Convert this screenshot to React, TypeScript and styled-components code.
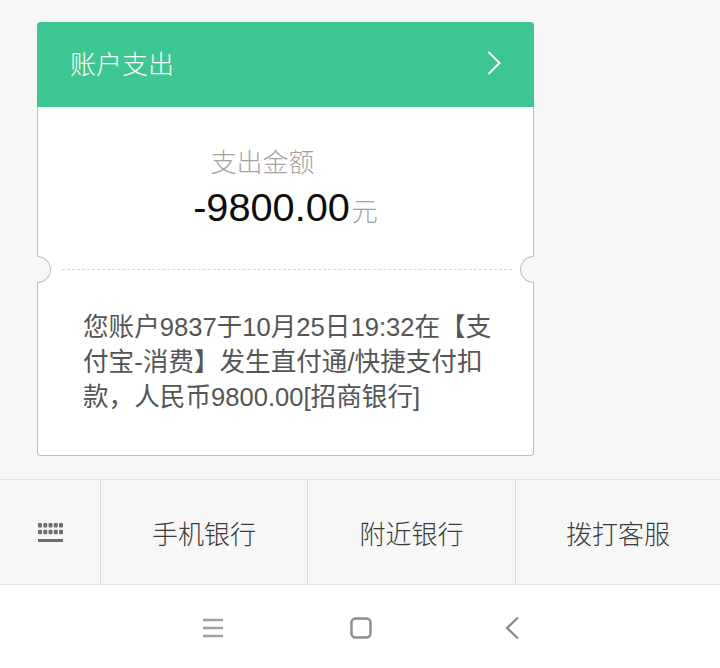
import React from 'react'
import styled, { createGlobalStyle } from 'styled-components'

const GlobalStyle = createGlobalStyle`
  html, body {
    margin: 0;
    padding: 0;
    background: #f7f7f7;
  }
  body {
    font-family: "Liberation Sans", "Noto Sans CJK SC", sans-serif;
  }
`

const Page = styled.div`
  width: 720px;
  height: 668px;
  display: flex;
  flex-direction: column;
  overflow: hidden;
`

const Content = styled.div`
  height: 480px;
  box-sizing: border-box;
  padding: 22px 0 0 37px;
  border-bottom: 1px solid #e4e4e4;
`

const Card = styled.div`
  width: 497px;
  height: 434px;
  box-sizing: border-box;
  background: #fff;
  border-radius: 4px;
  border: 1px solid #bdbdbd;
  border-top: none;
  display: flex;
  flex-direction: column;
`

const CardHeader = styled.div`
  height: 85px;
  box-sizing: border-box;
  margin: 0 -1px;
  padding: 0 33px 4px 33px;
  background: #3ec692;
  border-radius: 4px 4px 0 0;
  display: flex;
  align-items: center;
  justify-content: space-between;
  color: #fff;
  font-size: 26px;
  font-weight: 300;
`

const Summary = styled.div`
  height: 163px;
  box-sizing: border-box;
  padding-top: 38px;
  border-bottom: 1px dashed #d6d6d6;
  margin: 0 21px 0 24px;
  display: flex;
  flex-direction: column;
  align-items: center;
  position: relative;
`

const Notch = styled.div<{ $side: 'left' | 'right' }>`
  position: absolute;
  bottom: -14px;
  width: 14px;
  height: 27px;
  box-sizing: border-box;
  background: #f7f7f7;
  border: 1px solid #bdbdbd;
  ${p =>
    p.$side === 'left'
      ? 'left: -25px; border-left: none; border-radius: 0 14px 14px 0;'
      : 'right: -22px; border-right: none; border-radius: 14px 0 0 14px;'}
`

const SummaryLabel = styled.div`
  color: #a3a3a3;
  font-size: 26px;
  line-height: 36px;
  font-weight: 300;
  margin-right: 49px;
`

const Amount = styled.div`
  display: flex;
  align-items: baseline;
  color: #0c0c0c;
  font-size: 39.7px;
  line-height: 52px;
  margin-right: 3px;
`

const Unit = styled.span`
  color: #a3a3a3;
  font-size: 26px;
  margin-left: 2px;
  font-weight: 300;
`

const Message = styled.div`
  padding: 40px 36px 0 45px;
  color: #555;
  font-size: 25.6px;
  line-height: 35px;
`

const TabBar = styled.div`
  height: 105px;
  box-sizing: border-box;
  display: grid;
  grid-template-columns: 100px 207px 208px 1fr;
  border-bottom: 1px solid #e4e4e4;
`

const TabCell = styled.div`
  display: flex;
  align-items: center;
  justify-content: center;
  color: #3c3c3c;
  font-size: 26px;
  font-weight: 300;
  & + & {
    border-left: 1px solid #dcdcdc;
  }
`

const NavBar = styled.div`
  flex: 1;
  background: #fff;
  display: grid;
  grid-template-columns: 148px 155px auto;
  align-items: center;
  padding: 3px 0 0 202px;
`

const NavIcon = styled.svg<{ $light?: boolean }>`
  display: block;
  fill: none;
  stroke: ${p => (p.$light ? '#a0a0a0' : '#8c8c8c')};
  stroke-width: 2.4;
`

export default function App() {
  return (
    <Page>
      <GlobalStyle />
      <Content>
        <Card>
          <CardHeader>
            <span>账户支出</span>
            <svg width="14" height="24" viewBox="0 0 14 24" fill="none" stroke="#fff" strokeWidth="2">
              <path d="M1.5 1l11 11-11 11" />
            </svg>
          </CardHeader>
          <Summary>
            <SummaryLabel>支出金额</SummaryLabel>
            <Amount>
              -9800.00<Unit>元</Unit>
            </Amount>
            <Notch $side="left" />
            <Notch $side="right" />
          </Summary>
          <Message>
            您账户9837于10月25日19:32在【支付宝-消费】发生直付通/快捷支付扣款，人民币9800.00[招商银行]
          </Message>
        </Card>
      </Content>
      <TabBar>
        <TabCell>
          <svg width="25" height="19" viewBox="0 0 25 19" fill="#6e6e6e">
            {[0, 5.25, 10.5, 15.75, 21].map(x => (
              <React.Fragment key={x}>
                <rect x={x} y="0" width="4" height="4.5" rx="1" />
                <rect x={x} y="6.7" width="4" height="4.5" rx="1" />
              </React.Fragment>
            ))}
            <rect x="0" y="16" width="25" height="3" />
          </svg>
        </TabCell>
        <TabCell>手机银行</TabCell>
        <TabCell>附近银行</TabCell>
        <TabCell>拨打客服</TabCell>
      </TabBar>
      <NavBar>
        <NavIcon $light width="22" height="20" viewBox="0 0 22 20">
          <path d="M1 2h20M1 10h20M1 18h20" />
        </NavIcon>
        <NavIcon width="22" height="22" viewBox="0 0 22 22">
          <rect x="1.5" y="1.5" width="19" height="19" rx="4" />
        </NavIcon>
        <NavIcon width="14" height="24" viewBox="0 0 14 24">
          <path d="M13 1.5L2 12l11 10.5" />
        </NavIcon>
      </NavBar>
    </Page>
  )
}
